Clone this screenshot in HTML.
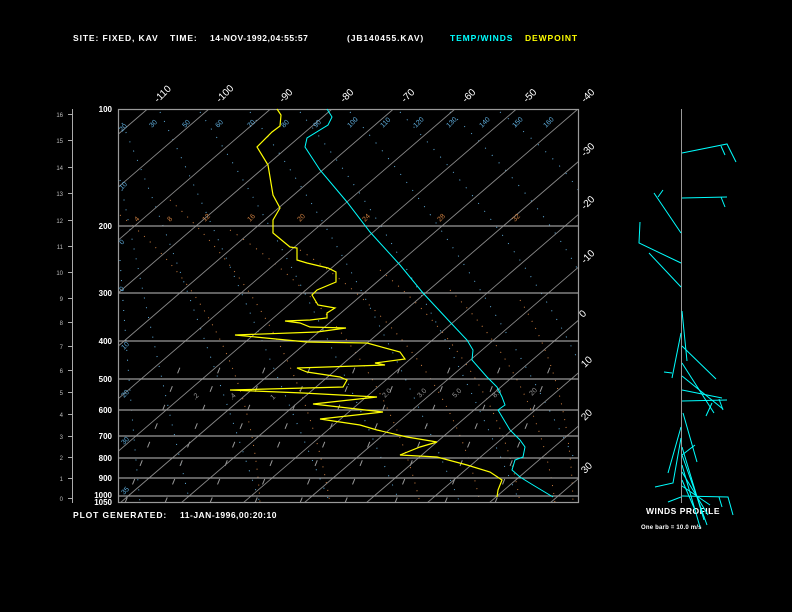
<!DOCTYPE html>
<html><head><meta charset="utf-8"><style>
html,body{margin:0;padding:0;background:#000;}
body{width:792px;height:612px;overflow:hidden;}
svg{display:block;}
text{font-family:"Liberation Sans",sans-serif;}
</style></head><body>
<svg width="792" height="612" viewBox="0 0 792 612" xmlns="http://www.w3.org/2000/svg">
<rect width="792" height="612" fill="#000"/>
<defs><clipPath id="b"><rect x="118" y="109" width="461" height="394"/></clipPath></defs>

<!-- header -->
<g font-size="8.5" font-weight="bold" fill="#fff" letter-spacing="0.9">
<text x="73" y="41">SITE:  FIXED, KAV</text>
<text x="170" y="41">TIME:</text>
<text x="210" y="41" letter-spacing="0.5">14-NOV-1992,04:55:57</text>
<text x="347" y="41">(JB140455.KAV)</text>
<text x="450" y="41" fill="#00ffff">TEMP/WINDS</text>
<text x="525" y="41" fill="#ffff00">DEWPOINT</text>
<text x="73" y="518">PLOT GENERATED:</text>
<text x="180" y="518" letter-spacing="0.5">11-JAN-1996,00:20:10</text>
<text x="646" y="514" letter-spacing="0.5">WINDS PROFILE</text>
<text x="641" y="529" font-size="6" letter-spacing="0.2">One barb = 10.0 m/s</text>
</g>

<!-- left km axis -->
<g stroke="#aaa" stroke-width="1">
<line x1="72.5" y1="109" x2="72.5" y2="503"/>
<g>
<line x1="68" y1="114.5" x2="72" y2="114.5"/><line x1="68" y1="140.5" x2="72" y2="140.5"/>
<line x1="68" y1="167.5" x2="72" y2="167.5"/><line x1="68" y1="193.5" x2="72" y2="193.5"/>
<line x1="68" y1="220.5" x2="72" y2="220.5"/><line x1="68" y1="246.5" x2="72" y2="246.5"/>
<line x1="68" y1="272.5" x2="72" y2="272.5"/><line x1="68" y1="298.5" x2="72" y2="298.5"/>
<line x1="68" y1="322.5" x2="72" y2="322.5"/><line x1="68" y1="346.5" x2="72" y2="346.5"/>
<line x1="68" y1="370.5" x2="72" y2="370.5"/><line x1="68" y1="392.5" x2="72" y2="392.5"/>
<line x1="68" y1="414.5" x2="72" y2="414.5"/><line x1="68" y1="436.5" x2="72" y2="436.5"/>
<line x1="68" y1="457.5" x2="72" y2="457.5"/><line x1="68" y1="478.5" x2="72" y2="478.5"/>
<line x1="68" y1="498.5" x2="72" y2="498.5"/>
</g></g>
<g font-size="6" fill="#bbb" text-anchor="end">
<text x="63" y="117">16</text><text x="63" y="143">15</text><text x="63" y="170">14</text><text x="63" y="196">13</text>
<text x="63" y="223">12</text><text x="63" y="249">11</text><text x="63" y="275">10</text><text x="63" y="301">9</text>
<text x="63" y="325">8</text><text x="63" y="349">7</text><text x="63" y="373">6</text><text x="63" y="395">5</text>
<text x="63" y="417">4</text><text x="63" y="439">3</text><text x="63" y="460">2</text><text x="63" y="481">1</text>
<text x="63" y="501">0</text>
</g>

<!-- pressure labels -->
<g font-size="8" font-weight="bold" fill="#fff" text-anchor="end">
<text x="112" y="112">100</text><text x="112" y="229">200</text><text x="112" y="296">300</text>
<text x="112" y="344">400</text><text x="112" y="382">500</text><text x="112" y="413">600</text>
<text x="112" y="439">700</text><text x="112" y="461">800</text><text x="112" y="481">900</text>
<text x="112" y="498">1000</text><text x="112" y="505">1050</text>
</g>

<!-- isotherm labels -->
<g font-size="10" fill="#fff">
<text transform="translate(158,103) rotate(-45)">-110</text>
<text transform="translate(220,103) rotate(-45)">-100</text>
<text transform="translate(283,103) rotate(-45)">-90</text>
<text transform="translate(344,103) rotate(-45)">-80</text>
<text transform="translate(405,103) rotate(-45)">-70</text>
<text transform="translate(466,103) rotate(-45)">-60</text>
<text transform="translate(527,103) rotate(-45)">-50</text>
<text transform="translate(585,103) rotate(-45)">-40</text>
<text transform="translate(585,157) rotate(-45)">-30</text>
<text transform="translate(585,210) rotate(-45)">-20</text>
<text transform="translate(585,264) rotate(-45)">-10</text>
<text transform="translate(583,318) rotate(-45)">0</text>
<text transform="translate(585,368) rotate(-45)">10</text>
<text transform="translate(585,421) rotate(-45)">20</text>
<text transform="translate(585,474) rotate(-45)">30</text>
</g>

<g clip-path="url(#b)">
<g stroke="#d08040" stroke-width="1" fill="none" stroke-dasharray="1 7">
<path d="M170 200 Q300 320 330 503"/>
<path d="M230 230 Q380 330 420 503"/>
<path d="M300 250 Q450 350 480 503"/>
<path d="M380 270 Q500 370 520 503"/>
<path d="M450 290 Q540 380 555 503"/>
<path d="M520 300 Q570 380 573 503"/>
<path d="M120 215 Q250 320 260 503"/>
</g>
<g stroke="#60b0e0" stroke-width="1" fill="none" stroke-dasharray="1 9">
<path d="M122 123 Q180 260 260 503"/>
<path d="M160 112 Q230 260 330 503"/>
<path d="M200 112 Q300 260 400 503"/>
<path d="M250 112 Q360 260 460 503"/>
<path d="M300 112 Q420 260 520 503"/>
<path d="M350 112 Q470 250 575 460"/>
<path d="M400 112 Q520 240 578 360"/>
<path d="M450 112 Q540 200 578 270"/>
<path d="M500 112 Q560 160 578 190"/>
<path d="M120 180 Q150 330 190 503"/>
<path d="M120 260 Q130 400 140 503"/>
</g>
<g stroke="#999" stroke-width="1" fill="none" stroke-dasharray="6 14">
<line x1="125" y1="503" x2="185" y2="355"/>
<line x1="165" y1="503" x2="225" y2="355"/>
<line x1="210" y1="503" x2="270" y2="355"/>
<line x1="255" y1="503" x2="315" y2="355"/>
<line x1="300" y1="503" x2="360" y2="355"/>
<line x1="345" y1="503" x2="405" y2="355"/>
<line x1="395" y1="503" x2="455" y2="355"/>
<line x1="445" y1="503" x2="505" y2="355"/>
<line x1="495" y1="503" x2="555" y2="355"/>
</g>
<g stroke="#888" stroke-width="0.9">
<line x1="147.5" y1="109" x2="-310" y2="503"/>
<line x1="209" y1="109" x2="-249" y2="503"/>
<line x1="270.5" y1="109" x2="-187" y2="503"/>
<line x1="332" y1="109" x2="-126" y2="503"/>
<line x1="393.5" y1="109" x2="-64" y2="503"/>
<line x1="455" y1="109" x2="-3" y2="503"/>
<line x1="516.5" y1="109" x2="58" y2="503"/>
<line x1="578" y1="109" x2="120" y2="503"/>
<line x1="639.5" y1="109" x2="181" y2="503"/>
<line x1="701" y1="109" x2="243" y2="503"/>
<line x1="762.5" y1="109" x2="304" y2="503"/>
<line x1="824" y1="109" x2="366" y2="503"/>
<line x1="885.5" y1="109" x2="427" y2="503"/>
<line x1="947" y1="109" x2="489" y2="503"/>
<line x1="1008.5" y1="109" x2="550" y2="503"/>
<line x1="1070" y1="109" x2="612" y2="503"/>
</g>
<g stroke="#9a9a9a" stroke-width="1.2">
<line x1="118" y1="226" x2="579" y2="226"/><line x1="118" y1="293" x2="579" y2="293"/>
<line x1="118" y1="341" x2="579" y2="341"/><line x1="118" y1="379" x2="579" y2="379"/>
<line x1="118" y1="410" x2="579" y2="410"/><line x1="118" y1="436" x2="579" y2="436"/>
<line x1="118" y1="458" x2="579" y2="458"/><line x1="118" y1="478" x2="579" y2="478"/>
<line x1="118" y1="496" x2="579" y2="496"/>
</g>
<g font-size="7" fill="#60b0e0">
<text transform="translate(122,132) rotate(-45)">20</text>
<text transform="translate(152,128) rotate(-45)">30</text>
<text transform="translate(185,128) rotate(-45)">50</text>
<text transform="translate(218,128) rotate(-45)">60</text>
<text transform="translate(250,128) rotate(-45)">70</text>
<text transform="translate(284,128) rotate(-45)">80</text>
<text transform="translate(316,128) rotate(-45)">90</text>
<text transform="translate(350,128) rotate(-45)">100</text>
<text transform="translate(383,128) rotate(-45)">110</text>
<text transform="translate(416,128) rotate(-45)">120</text>
<text transform="translate(449,128) rotate(-45)">130</text>
<text transform="translate(482,128) rotate(-45)">140</text>
<text transform="translate(515,128) rotate(-45)">150</text>
<text transform="translate(546,128) rotate(-45)">160</text>
<text transform="translate(122,190) rotate(-45)">10</text>
<text transform="translate(122,245) rotate(-45)">0</text>
<text transform="translate(122,292) rotate(-45)">0</text>
<text transform="translate(124,350) rotate(-45)">10</text>
<text transform="translate(124,398) rotate(-45)">20</text>
<text transform="translate(124,445) rotate(-45)">30</text>
<text transform="translate(124,495) rotate(-45)">35</text>
</g>
<g font-size="7" fill="#d08040">
<text transform="translate(137,222) rotate(-45)">4</text>
<text transform="translate(170,222) rotate(-45)">8</text>
<text transform="translate(205,222) rotate(-45)">12</text>
<text transform="translate(250,222) rotate(-45)">16</text>
<text transform="translate(300,222) rotate(-45)">20</text>
<text transform="translate(365,222) rotate(-45)">24</text>
<text transform="translate(440,222) rotate(-45)">28</text>
<text transform="translate(515,222) rotate(-45)">32</text>
</g>
<g font-size="7" fill="#999">
<text transform="translate(195,400) rotate(-45)">.2</text>
<text transform="translate(232,400) rotate(-45)">.4</text>
<text transform="translate(273,400) rotate(-45)">1</text>
<text transform="translate(385,398) rotate(-45)">2.0</text>
<text transform="translate(420,398) rotate(-45)">3.0</text>
<text transform="translate(455,398) rotate(-45)">5.0</text>
<text transform="translate(495,398) rotate(-45)">8.0</text>
<text transform="translate(532,396) rotate(-45)">20</text>
</g>
</g>
<rect x="118.5" y="109.5" width="460" height="393" fill="none" stroke="#9a9a9a" stroke-width="1.2"/>

<polyline fill="none" stroke="#00ffff" stroke-width="1" points="327,109 332,117 328,125 307,138 305,147 320,170 347,202 370,232 400,265 423,293 450,322 467,340 473,350 472,360 487,377 497,387 502,397 505,405 498,410 510,430 520,440 525,447 523,457 515,460 512,470 520,477 533,485 553,497"/>
<polyline fill="none" stroke="#ffff00" stroke-width="1.2" points="277,109 281,115 280,126 272,132 257,147 268,165 273,195 280,208 273,220 273,233 290,247 297,248 297,260 307,263 328,268 336,272 336,282 317,290 312,295 318,305 335,308 327,313 327,318 310,320 285,321 300,323 310,327 346,328 317,332 235,335 307,342 367,343 400,352 405,359 375,363 385,365 297,368 307,372 340,377 347,380 343,387 230,390 303,393 377,397 313,404 383,412 320,419 360,425 377,430 407,437 437,442 420,447 400,455 437,457 467,465 490,472 502,480 498,490 497,497"/>

<line x1="681.5" y1="109" x2="681.5" y2="503" stroke="#999" stroke-width="1"/>
<g stroke="#00ffff" stroke-width="1" fill="none">
<polyline points="682,153 727,144 736,162"/><line x1="721" y1="146" x2="725" y2="155"/>
<polyline points="682,198 727,197"/><line x1="721" y1="197" x2="725" y2="207"/>
<polyline points="681,233 654,193"/><line x1="658" y1="197" x2="663" y2="190"/>
<polyline points="681,263 639,243 640,222"/>
<polyline points="681,287 649,253"/>
<polyline points="682,311 687,361"/>
<polyline points="681,333 672,378"/><line x1="672" y1="373" x2="664" y2="372"/>
<polyline points="682,346 716,379"/>
<polyline points="682,363 714,413"/>
<polyline points="682,376 723,409"/>
<polyline points="682,390 722,398"/>
<polyline points="682,401 727,400"/><line x1="719" y1="399" x2="723" y2="410"/><line x1="712" y1="403" x2="706" y2="416"/>
<polyline points="683,413 697,462"/>
<polyline points="681,427 668,473"/>
<polyline points="681,438 673,483 655,487"/>
<polyline points="682,447 704,520"/>
<polyline points="682,455 707,525"/>
<polyline points="682,465 700,527"/>
<polyline points="682,472 708,515"/>
<polyline points="682,480 695,510"/>
<polyline points="682,486 710,505"/>
<polyline points="682,455 695,445"/>
<polyline points="682,496 728,497 733,515"/>
<line x1="719" y1="497" x2="722" y2="507"/>
<polyline points="681,497 668,502"/>
</g>
</svg>
</body></html>
